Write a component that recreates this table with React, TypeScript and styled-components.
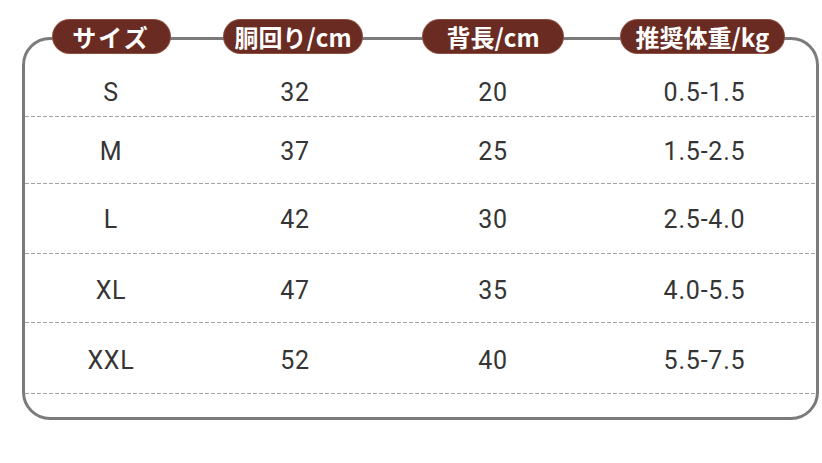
import React from "react";
import styled, { createGlobalStyle } from "styled-components";

const headers = [
  { label: "サイズ", width: 117, shift: 0, spacing: 2 },
  { label: "胴回り/cm", width: 138, shift: -2, spacing: 0 },
  { label: "背長/cm", width: 140, shift: 0, spacing: 0 },
  { label: "推奨体重/kg", width: 163, shift: -2, spacing: 0 },
];

const rows = [
  { size: "S", chest: "32", back: "20", weight: "0.5-1.5", height: 64, pad: 14 },
  { size: "M", chest: "37", back: "25", weight: "1.5-2.5", height: 67, pad: 2 },
  { size: "L", chest: "42", back: "30", weight: "2.5-4.0", height: 70, pad: 0 },
  { size: "XL", chest: "47", back: "35", weight: "4.0-5.5", height: 69, pad: 3 },
  { size: "XXL", chest: "52", back: "40", weight: "5.5-7.5", height: 71, pad: 4 },
];

export default function App() {
  return (
    <>
      <GlobalStyle />
      <Page>
        <Frame>
          <HeaderRow>
            {headers.map((h) => (
              <HeaderCell key={h.label}>
                <Pill $width={h.width} $shift={h.shift} $spacing={h.spacing}>
                  {h.label}
                </Pill>
              </HeaderCell>
            ))}
          </HeaderRow>
          {rows.map((r) => (
            <Row key={r.size} $height={r.height} $pad={r.pad}>
              <Cell>{r.size}</Cell>
              <Cell>{r.chest}</Cell>
              <Cell>{r.back}</Cell>
              <Cell>{r.weight}</Cell>
            </Row>
          ))}
          <Tail />
        </Frame>
      </Page>
    </>
  );
}

const GlobalStyle = createGlobalStyle`
  html, body {
    margin: 0;
    padding: 0;
    background: #ffffff;
  }
  body {
    font-family: Roboto, "Liberation Sans", "Noto Sans CJK JP", sans-serif;
  }
`;

const Page = styled.div`
  width: 822px;
  height: 463px;
  padding: 37px 0 0 22px;
  box-sizing: border-box;
`;

const Frame = styled.div`
  width: 797px;
  box-sizing: border-box;
  border: 3px solid #7b7b7b;
  border-radius: 28px;
  display: flex;
  flex-direction: column;
`;

const columns = "172px 196px 200px 1fr";

const HeaderRow = styled.div`
  display: grid;
  grid-template-columns: ${columns};
  margin-top: -20px;
  height: 33px;
`;

const HeaderCell = styled.div`
  display: flex;
  justify-content: center;
`;

const Pill = styled.div<{ $width: number; $shift: number; $spacing: number }>`
  width: ${({ $width }) => $width}px;
  margin-left: ${({ $shift }) => $shift * 2}px;
  height: 33px;
  line-height: 33px;
  box-sizing: border-box;
  border-radius: 17px;
  background: #6a2c22;
  box-shadow: 0 0 0 1px #8c4f42;
  color: #ffffff;
  font-family: "Noto Sans CJK JP", "Noto Sans", sans-serif;
  font-weight: 700;
  font-size: 24px;
  letter-spacing: ${({ $spacing }) => $spacing}px;
  text-align: center;
  white-space: nowrap;
`;

const Row = styled.div<{ $height: number; $pad: number }>`
  display: grid;
  grid-template-columns: ${columns};
  align-items: center;
  height: ${({ $height }) => $height}px;
  padding-top: ${({ $pad }) => $pad}px;
  box-sizing: border-box;
  background: repeating-linear-gradient(
      90deg,
      #a3a3a3 0 4px,
      transparent 4px 6px
    )
    left bottom / 100% 1px no-repeat;
`;

const Cell = styled.div`
  text-align: center;
  font-size: 25px;
  letter-spacing: 0.8px;
  color: #353535;
`;

const Tail = styled.div`
  height: 23px;
`;
